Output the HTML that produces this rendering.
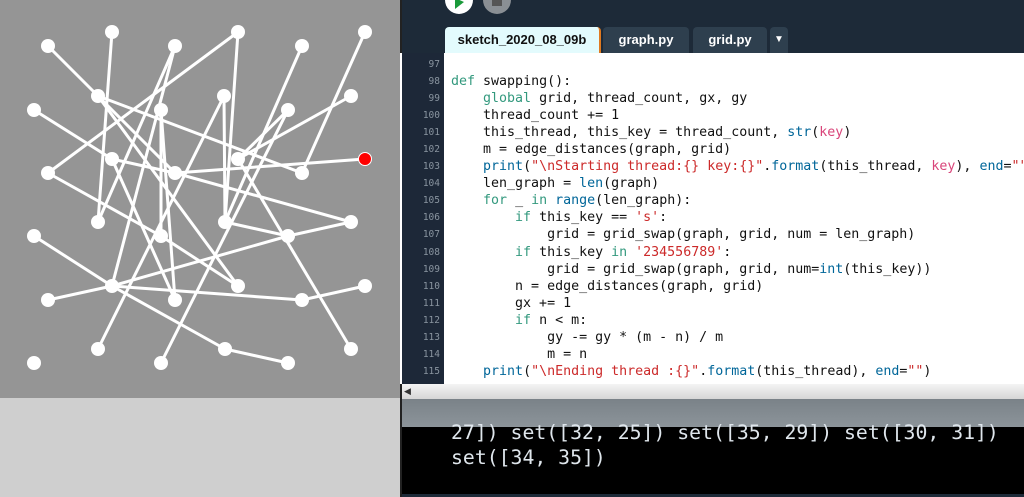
<!DOCTYPE html>
<html><head><style>
body{margin:0;width:1024px;height:497px;overflow:hidden;position:relative;background:#1d2a38;font-family:"Liberation Sans",sans-serif}
.abs{position:absolute}
#code{left:451px;top:56px;font-family:"DejaVu Sans Mono",monospace;font-size:13.3px;line-height:17.05px;white-space:pre;color:#111}
#nums{left:400px;width:40px;top:56px;font-family:"DejaVu Sans Mono",monospace;font-size:9.5px;line-height:17.05px;text-align:right;color:#8a95a0;white-space:pre}
.k{color:#33997e}.b{color:#006699}.s{color:#cc2a2a}.p{color:#d9457a}
.tab{top:27px;height:26px;line-height:26px;font-size:13px;font-weight:bold;text-align:center;color:#fff;background:#2e3f4e;border-radius:4px 4px 0 0}
</style></head><body>
<div class="abs" style="left:0;top:0;width:400px;height:398px;background:#959595"></div>
<div class="abs" style="left:0;top:398px;width:400px;height:99px;background:#cfcfcf"></div>
<div class="abs" style="left:400px;top:0;width:2px;height:497px;background:#222"></div>
<svg class="abs" style="left:0;top:0" width="400" height="398">
<g stroke="#fff" stroke-width="3" stroke-linecap="round">
<line x1="48" y1="46" x2="98" y2="96"/><line x1="112" y1="32" x2="98" y2="222"/>
<line x1="238" y1="32" x2="48" y2="173"/><line x1="238" y1="32" x2="225" y2="222"/>
<line x1="175" y1="46" x2="98" y2="222"/><line x1="175" y1="46" x2="112" y2="286"/>
<line x1="302" y1="46" x2="225" y2="222"/><line x1="365" y1="32" x2="302" y2="173"/>
<line x1="98" y1="96" x2="302" y2="173"/><line x1="98" y1="96" x2="175" y2="173"/>
<line x1="98" y1="96" x2="238" y2="286"/><line x1="34" y1="110" x2="112" y2="159"/>
<line x1="161" y1="110" x2="161" y2="236"/><line x1="224" y1="96" x2="225" y2="222"/>
<line x1="224" y1="96" x2="98" y2="349"/><line x1="288" y1="110" x2="161" y2="363"/>
<line x1="288" y1="110" x2="238" y2="159"/><line x1="351" y1="96" x2="238" y2="159"/>
<line x1="112" y1="159" x2="175" y2="173"/><line x1="112" y1="159" x2="175" y2="300"/>
<line x1="175" y1="173" x2="365" y2="159"/><line x1="175" y1="173" x2="351" y2="222"/>
<line x1="48" y1="173" x2="161" y2="236"/><line x1="238" y1="159" x2="351" y2="349"/>
<line x1="225" y1="222" x2="288" y2="236"/><line x1="288" y1="236" x2="112" y2="286"/>
<line x1="351" y1="222" x2="288" y2="236"/><line x1="34" y1="236" x2="112" y2="286"/>
<line x1="48" y1="300" x2="112" y2="286"/><line x1="112" y1="286" x2="302" y2="300"/>
<line x1="302" y1="300" x2="365" y2="286"/><line x1="112" y1="286" x2="225" y2="349"/>
<line x1="225" y1="349" x2="288" y2="363"/><line x1="161" y1="236" x2="238" y2="286"/>
<line x1="161" y1="110" x2="175" y2="300"/>
</g>
<g fill="#fff">
<circle cx="112" cy="32" r="7"/><circle cx="238" cy="32" r="7"/><circle cx="365" cy="32" r="7"/>
<circle cx="48" cy="46" r="7"/><circle cx="175" cy="46" r="7"/><circle cx="302" cy="46" r="7"/>
<circle cx="98" cy="96" r="7"/><circle cx="224" cy="96" r="7"/><circle cx="351" cy="96" r="7"/>
<circle cx="34" cy="110" r="7"/><circle cx="161" cy="110" r="7"/><circle cx="288" cy="110" r="7"/>
<circle cx="112" cy="159" r="7"/><circle cx="238" cy="159" r="7"/>
<circle cx="48" cy="173" r="7"/><circle cx="175" cy="173" r="7"/><circle cx="302" cy="173" r="7"/>
<circle cx="98" cy="222" r="7"/><circle cx="225" cy="222" r="7"/><circle cx="351" cy="222" r="7"/>
<circle cx="34" cy="236" r="7"/><circle cx="161" cy="236" r="7"/><circle cx="288" cy="236" r="7"/>
<circle cx="112" cy="286" r="7"/><circle cx="238" cy="286" r="7"/><circle cx="365" cy="286" r="7"/>
<circle cx="48" cy="300" r="7"/><circle cx="175" cy="300" r="7"/><circle cx="302" cy="300" r="7"/>
<circle cx="98" cy="349" r="7"/><circle cx="225" cy="349" r="7"/><circle cx="351" cy="349" r="7"/>
<circle cx="34" cy="363" r="7"/><circle cx="161" cy="363" r="7"/><circle cx="288" cy="363" r="7"/>
</g>
<circle cx="365" cy="159" r="6.5" fill="#f00" stroke="#fff" stroke-width="1"/>
</svg>
<svg class="abs" style="left:402px;top:0" width="622" height="27">
<circle cx="57" cy="0" r="14" fill="#fff"/><path d="M53 -2 L53 9 L62 2Z" fill="#1a9a3a"/>
<circle cx="95" cy="0" r="14" fill="#8a8f94"/><rect x="90" y="0" width="10" height="6" fill="#555"/>
</svg>
<div class="abs tab" style="left:445px;width:154px;background:#e3fbfd;color:#111;border-right:2px solid #e07a20">sketch_2020_08_09b</div>
<div class="abs tab" style="left:603px;width:86px">graph.py</div>
<div class="abs tab" style="left:693px;width:74px">grid.py</div>
<div class="abs tab" style="left:770px;width:18px;font-size:10px">▼</div>
<div class="abs" style="left:400px;top:53px;width:624px;height:331px;background:#fff"></div>
<div class="abs" style="left:402px;top:53px;width:42px;height:331px;background:#1d2838"></div>
<div id="nums" class="abs">97
98
99
100
101
102
103
104
105
106
107
108
109
110
111
112
113
114
115</div>
<div id="code" class="abs">
<span class="k">def</span> swapping():
    <span class="k">global</span> grid, thread_count, gx, gy
    thread_count += 1
    this_thread, this_key = thread_count, <span class="b">str</span>(<span class="p">key</span>)
    m = edge_distances(graph, grid)
    <span class="b">print</span>(<span class="s">"\nStarting thread:{} key:{}"</span>.<span class="b">format</span>(this_thread, <span class="p">key</span>), <span class="b">end</span>=<span class="s">""</span>
    len_graph = <span class="b">len</span>(graph)
    <span class="k">for</span> _ <span class="k">in</span> <span class="b">range</span>(len_graph):
        <span class="k">if</span> this_key == <span class="s">'s'</span>:
            grid = grid_swap(graph, grid, num = len_graph)
        <span class="k">if</span> this_key <span class="k">in</span> <span class="s">'234556789'</span>:
            grid = grid_swap(graph, grid, num=<span class="b">int</span>(this_key))
        n = edge_distances(graph, grid)
        gx += 1
        <span class="k">if</span> n &lt; m:
            gy -= gy * (m - n) / m
            m = n
    <span class="b">print</span>(<span class="s">"\nEnding thread :{}"</span>.<span class="b">format</span>(this_thread), <span class="b">end</span>=<span class="s">""</span>)</div>
<div class="abs" style="left:402px;top:384px;width:622px;height:15px;background:linear-gradient(#f4f4f4,#d6d6d6)"></div>
<div class="abs" style="left:404px;top:386px;font-size:9px;color:#333">◀</div>
<div class="abs" style="left:402px;top:399px;width:622px;height:28px;background:linear-gradient(#7a8288,#8c949a)"></div>
<div class="abs" style="left:402px;top:427px;width:622px;height:67px;background:#000"></div>
<div class="abs" style="left:451px;top:420px;font-family:'DejaVu Sans Mono',monospace;font-size:19.8px;line-height:25px;color:#dfe6ec;white-space:pre">27]) set([32, 25]) set([35, 29]) set([30, 31])
set([34, 35])</div>
<div class="abs" style="left:402px;top:494px;width:622px;height:3px;background:#1d2a38"></div>
</body></html>
